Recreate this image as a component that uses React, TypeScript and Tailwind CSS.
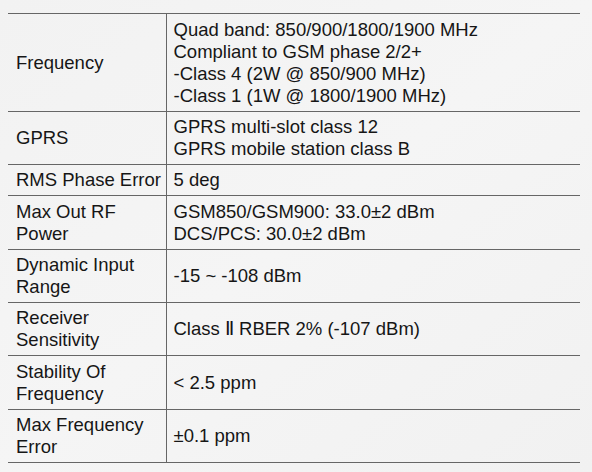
const rows: { label: string; value: string[]; h: string }[] = [
  {
    label: "Frequency",
    value: [
      "Quad band: 850/900/1800/1900 MHz",
      "Compliant to GSM phase 2/2+",
      "-Class 4 (2W @ 850/900 MHz)",
      "-Class 1 (1W @ 1800/1900 MHz)",
    ],
    h: "h-[98px]",
  },
  { label: "GPRS", value: ["GPRS multi-slot class 12", "GPRS mobile station class B"], h: "h-[53px]" },
  { label: "RMS Phase Error", value: ["5 deg"], h: "h-[31px]" },
  { label: "Max Out RF Power", value: ["GSM850/GSM900: 33.0±2 dBm", "DCS/PCS: 30.0±2 dBm"], h: "h-[54px]" },
  { label: "Dynamic Input Range", value: ["-15 ~ -108 dBm"], h: "h-[53px]" },
  { label: "Receiver Sensitivity", value: ["Class Ⅱ RBER 2% (-107 dBm)"], h: "h-[53px]" },
  { label: "Stability Of Frequency", value: ["< 2.5 ppm"], h: "h-[54px]" },
  { label: "Max Frequency Error", value: ["±0.1 ppm"], h: "h-[53px]" },
];

export default function App() {
  return (
    <div
      className="w-[592px] h-[472px] overflow-hidden bg-gradient-to-br from-[#f2f2f2] via-[#f5f5f5] to-[#f1f1f1] px-[8px] pt-[13px] text-[#161616]"
      style={{ fontFamily: '"Liberation Sans", Arial, sans-serif' }}
    >
      <table className="w-[572px] table-fixed border-collapse text-[18.5px] leading-[22px]">
        <colgroup>
          <col className="w-[158px]" />
          <col />
        </colgroup>
        <tbody>
          {rows.map((row) => (
            <tr key={row.label} className={`${row.h} border-y border-[#666666]`}>
              <td className="border-r border-[#666666] pl-[8px] pr-[1px] py-0 align-middle">{row.label}</td>
              <td className="pl-[7px] pr-[8px] py-0 align-middle">
                {row.value.map((line) => (
                  <div key={line}>{line}</div>
                ))}
              </td>
            </tr>
          ))}
        </tbody>
      </table>
    </div>
  );
}
